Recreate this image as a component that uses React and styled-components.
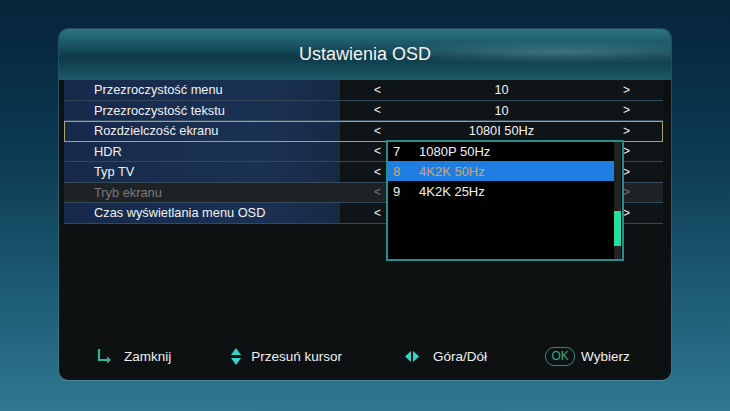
import styled, { createGlobalStyle } from 'styled-components';

const GlobalStyle = createGlobalStyle`
  html, body {
    margin: 0;
    padding: 0;
    width: 730px;
    height: 411px;
    overflow: hidden;
  }
  body {
    font-family: "Liberation Sans", Arial, sans-serif;
    background: linear-gradient(to bottom, #06243a 0%, #0b3850 35%, #1f5f78 75%, #2f7890 100%);
  }
`;

const Screen = styled.div`
  width: 730px;
  height: 411px;
  padding-top: 29px;
  box-sizing: border-box;
`;

const Panel = styled.div`
  position: relative;
  width: 612px;
  height: 351px;
  margin-left: 59px;
  border-radius: 9px;
  background: #0e1112;
  box-shadow: 0 1px 0 rgba(120, 170, 180, 0.35), 0 0 0 1px rgba(90, 140, 150, 0.35);
  display: flex;
  flex-direction: column;
  overflow: hidden;
`;

const Header = styled.div`
  height: 51px;
  display: flex;
  align-items: center;
  justify-content: center;
  color: #f2f4f4;
  font-size: 18px;
  background:
    radial-gradient(ellipse 45% 35% at 82% 45%, rgba(110, 170, 180, 0.45), transparent 70%),
    linear-gradient(to bottom, #2d7684 0%, #1a5564 30%, #0f3a48 55%, #154a58 80%, #1d5b68 100%);
`;

const List = styled.div`
  position: relative;
  padding: 0 8px 0 5px;
`;

const Row = styled.div`
  display: grid;
  grid-template-columns: 276px 1fr;
  height: 19.5px;
  border-bottom: 1px solid ${p => (p.$selected ? 'transparent' : '#34495a')};
  outline: ${p => (p.$selected ? '1px solid #a9a274' : 'none')};
  outline-offset: -1px;
  font-size: 12.8px;
  color: ${p => (p.$disabled ? '#767a7c' : '#f2f2f2')};
  background: ${p => (p.$disabled ? '#1f2224' : '#0f1416')};
`;

const Label = styled.div`
  display: flex;
  align-items: center;
  padding-left: 30px;
  background: ${p =>
    p.$disabled
      ? '#202325'
      : 'linear-gradient(to right, #16294a 0%, #1a3154 70%, #172a44 100%)'};
`;

const Value = styled.div`
  display: grid;
  grid-template-columns: 45px 1fr 45px;
  align-items: center;
`;

const Arrow = styled.span`
  text-align: ${p => (p.$right ? 'left' : 'right')};
  padding: ${p => (p.$right ? '0 0 0 5px' : '0 4px 0 0')};
  font-size: 12px;
`;

const Current = styled.span`
  text-align: center;
`;

const Dropdown = styled.div`
  position: absolute;
  left: 327px;
  top: 60px;
  width: 234px;
  height: 117px;
  border: 2px solid #2a8b8c;
  background: #000;
  display: flex;
`;

const Options = styled.div`
  flex: 1;
  margin-top: -1px;
`;

const Option = styled.div`
  display: flex;
  align-items: center;
  height: 20px;
  font-size: 13px;
  color: ${p => (p.$active ? '#d0a868' : '#f2f2f2')};
  background: ${p => (p.$active ? '#1f7ee2' : 'transparent')};
`;

const OptionNum = styled.span`
  width: 31px;
  padding-left: 5px;
  box-sizing: border-box;
`;

const Scrollbar = styled.div`
  width: 7px;
  background: #202324;
  margin-right: 1px;
  display: flex;
  flex-direction: column;
  justify-content: flex-end;
  padding-bottom: 13px;
`;

const Thumb = styled.div`
  height: 35px;
  background: #22e0a0;
`;

const Footer = styled.div`
  margin-top: auto;
  height: 55px;
  display: flex;
  align-items: flex-start;
  padding: 21px 0 0 38px;
  box-sizing: border-box;
  font-size: 13.5px;
  color: #eef0f0;
`;

const Hint = styled.div`
  display: flex;
  align-items: center;
  gap: ${p => p.$gap || 10}px;
  height: 20px;
  margin-left: ${p => p.$offset || 0}px;
`;

const OkBadge = styled.span`
  display: inline-flex;
  align-items: center;
  justify-content: center;
  width: 28px;
  height: 17px;
  border: 1px solid #2b8f78;
  border-radius: 9px;
  color: #3aa88f;
  font-size: 12px;
`;

const rows = [
  { label: 'Przezroczystość menu', value: '10' },
  { label: 'Przezroczystość tekstu', value: '10' },
  { label: 'Rozdzielczość ekranu', value: '1080I 50Hz', selected: true },
  { label: 'HDR', value: '' },
  { label: 'Typ TV', value: '' },
  { label: 'Tryb ekranu', value: '', disabled: true },
  { label: 'Czas wyświetlania menu OSD', value: '' },
];

const options = [
  { n: '7', text: '1080P 50Hz' },
  { n: '8', text: '4K2K 50Hz', active: true },
  { n: '9', text: '4K2K 25Hz' },
];

const App = () => {
  return (
    <Screen>
      <GlobalStyle />
      <Panel>
        <Header>Ustawienia OSD</Header>
        <List>
          {rows.map(r => (
            <Row key={r.label} $selected={r.selected} $disabled={r.disabled}>
              <Label $disabled={r.disabled}>{r.label}</Label>
              <Value>
                <Arrow>&lt;</Arrow>
                <Current>{r.value}</Current>
                <Arrow $right>&gt;</Arrow>
              </Value>
            </Row>
          ))}
          <Dropdown>
            <Options>
              {options.map(o => (
                <Option key={o.n} $active={o.active}>
                  <OptionNum>{o.n}</OptionNum>
                  {o.text}
                </Option>
              ))}
            </Options>
            <Scrollbar>
              <Thumb />
            </Scrollbar>
          </Dropdown>
        </List>
        <Footer>
          <Hint $gap={12}>
            <svg width="15" height="16" viewBox="0 0 15 16">
              <path d="M2 1 V12 H11" fill="none" stroke="#2fb596" strokeWidth="2.2" />
              <path d="M10 8.5 L14 12 L10 15.5 Z" fill="#2fb596" />
            </svg>
            Zamknij
          </Hint>
          <Hint $offset={60}>
            <svg width="10" height="17" viewBox="0 0 10 17">
              <path d="M5 0 L10 7 H0 Z" fill="#33d6c6" />
              <path d="M5 17 L10 10 H0 Z" fill="#33d6c6" />
            </svg>
            Przesuń kursor
          </Hint>
          <Hint $gap={14} $offset={63}>
            <svg width="14" height="11" viewBox="0 0 14 11">
              <path d="M0 5.5 L6 0 V11 Z" fill="#33d6c6" />
              <path d="M14 5.5 L8 0 V11 Z" fill="#33d6c6" />
            </svg>
            Góra/Dół
          </Hint>
          <Hint $gap={6} $offset={58}>
            <OkBadge>OK</OkBadge>
            Wybierz
          </Hint>
        </Footer>
      </Panel>
    </Screen>
  );
};

export default App;
